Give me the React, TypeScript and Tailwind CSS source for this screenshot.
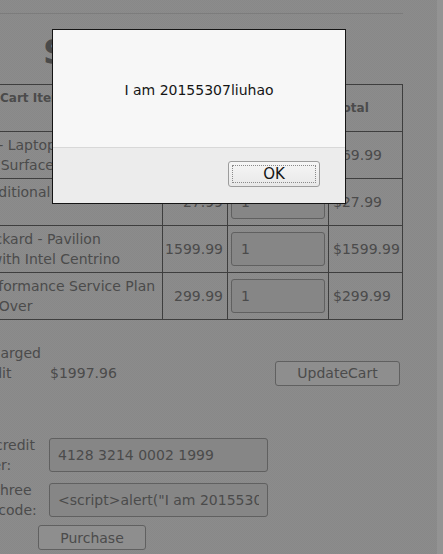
import React from 'react';

const items = [
  { name: 'Studio RTA - Laptop/Reading Cart with Tilting Surface - Cherry', price: '69.99', total: '$69.99' },
  { name: 'Dynex - Traditional Notebook Case', price: '27.99', total: '$27.99' },
  { name: 'Hewlett-Packard - Pavilion Notebook with Intel Centrino', price: '1599.99', total: '$1599.99' },
  { name: '3 - Year Performance Service Plan $1000 and Over', price: '299.99', total: '$299.99' },
];

export default function App() {
  return (
    <div className="relative h-[554px] w-[443px] overflow-hidden bg-[#8a8a8a] font-['DejaVu_Sans',sans-serif] text-[14px] leading-[20px] text-[#4b4b4b]">
      <div className="flex h-full">
        <div className="w-[437px] overflow-hidden bg-[repeating-conic-gradient(#8c8c8c_0_25%,#888888_0_50%)] bg-[length:2px_2px]">
          <div className="ml-[-86px] w-[489px]">
            <div className="mt-[13px] h-px w-full bg-[#7c7c7c]" />

            <h1 className="mt-[21px] h-[34px] pl-[129px] text-[34px] font-bold leading-[34px] text-[#4a4a4a]">
              Shopping Cart
            </h1>

            <div className="mt-[15px]">
              <div className="grid h-[47px] grid-cols-[248px_65px_101px_75px] font-bold">
                <div className="flex items-center border-l border-t border-[#3e3e3e] pl-[17px] pr-[4px] text-[12px]">
                  Shopping Cart Items -- To Buy Now
                </div>
                <div className="flex items-center justify-center border-l border-t border-[#3e3e3e] text-[12px]">Price</div>
                <div className="flex items-center justify-center border-l border-t border-[#3e3e3e] text-[12px]">Quantity</div>
                <div className="flex items-center border-x border-t border-[#3e3e3e] pl-[7px] text-[12px]">Total</div>
              </div>
              {items.map((item, i) => (
                <div
                  key={i}
                  className={
                    'grid grid-cols-[248px_65px_101px_75px] ' +
                    (i === items.length - 1 ? 'h-[48px] border-b border-[#3e3e3e]' : 'h-[47px]')
                  }
                >
                  <div className="flex items-center border-l border-t border-[#3e3e3e] px-[4px]">{item.name}</div>
                  <div className="flex items-center justify-end border-l border-t border-[#3e3e3e] pr-[4px]">{item.price}</div>
                  <div className="flex items-center border-l border-t border-[#3e3e3e] pl-[3px]">
                    <input
                      readOnly
                      value="1"
                      className="h-[34px] w-[94px] rounded-[3px] border border-[#606060] bg-[#868686] pl-[9px] text-[#4b4b4b] outline-none"
                    />
                  </div>
                  <div className="flex items-center border-x border-t border-[#3e3e3e] pl-[4px]">{item.total}</div>
                </div>
              ))}
            </div>

            <div className="mt-[23px] flex h-[60px] items-center">
              <div className="ml-[3px] w-[130px]">The total charged to your credit card:</div>
              <div className="ml-[3px] w-[225px]">$1997.96</div>
              <button className="h-[25px] w-[125px] rounded-[3px] border border-[#606060] bg-[#8e8e8e] text-[#4b4b4b]">
                UpdateCart
              </button>
            </div>

            <div className="mt-[32px] flex h-[40px] items-center">
              <div className="ml-[3px] w-[130px]">Enter your credit card number:</div>
              <input
                readOnly
                value="4128 3214 0002 1999"
                className="ml-[2px] h-[34px] w-[219px] rounded-[3px] border border-[#606060] bg-[#868686] px-[8px] text-[#4b4b4b] outline-none"
              />
            </div>

            <div className="mt-[5px] flex h-[40px] items-center">
              <div className="ml-[-10px] w-[140px] text-center">Enter your three digit access code:</div>
              <input
                readOnly
                value={'<script>alert("I am 20155307liuhao")</script>'}
                className="ml-[5px] h-[34px] w-[219px] rounded-[3px] border border-[#606060] bg-[#868686] px-[8px] text-[#4b4b4b] outline-none"
              />
            </div>

            <div className="mt-[5px]">
              <button className="ml-[124px] h-[25px] w-[108px] rounded-[3px] border border-[#606060] bg-[#8e8e8e] text-[#4b4b4b]">
                Purchase
              </button>
            </div>
          </div>
        </div>
        <div className="w-[6px] bg-[#939393]" />
      </div>

      <div className="absolute left-[52px] top-[29px] flex h-[175px] w-[294px] flex-col border border-[#151515] text-[#151515]">
        <div className="h-[118px] border-b border-[#d8d8d8] bg-[#f7f7f7] pt-[50px] text-center">I am 20155307liuhao</div>
        <div className="flex flex-1 justify-end bg-[#ececec] pr-[25px] pt-[13px]">
          <button className="relative h-[26px] w-[92px] rounded-[3px] border border-[#9c9c9c] bg-gradient-to-b from-[#f6f6f6] to-[#e8e8e8] text-[15px] text-[#151515]">
            <span className="absolute inset-[3px] border border-dotted border-[#8a8a8a]" />
            OK
          </button>
        </div>
      </div>
    </div>
  );
}
